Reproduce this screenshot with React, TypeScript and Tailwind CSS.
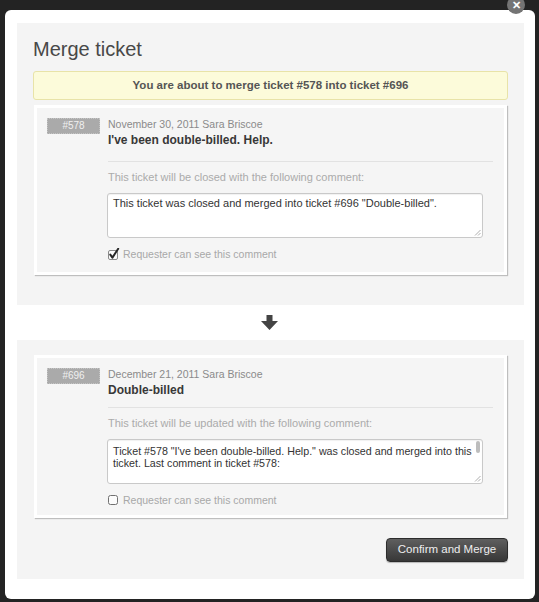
import React from "react";

function Badge({ id }: { id: string }) {
  return (
    <div className="flex h-[16px] w-[53px] shrink-0 items-center justify-center border border-dotted border-[#c4c4c4] bg-[#aaaaaa] text-[10px] leading-none text-[#f0f0f0]">
      {id}
    </div>
  );
}

function CheckedBox() {
  return (
    <svg width="12" height="12" viewBox="0 0 12 12" className="shrink-0">
      <rect x="0.5" y="2.5" width="9" height="9" rx="1.5" fill="#fbfbfb" stroke="#8a8a8a" />
      <path d="M2.3 6.6 L4.4 9.6 L10.2 0.8" fill="none" stroke="#262626" strokeWidth="2" strokeLinecap="round" strokeLinejoin="round" />
    </svg>
  );
}

function EmptyBox() {
  return (
    <svg width="12" height="12" viewBox="0 0 12 12" className="shrink-0">
      <rect x="0.5" y="1.5" width="9" height="9" rx="2" fill="#fbfbfb" stroke="#707070" />
    </svg>
  );
}

function Grip() {
  return (
    <svg width="7" height="7" viewBox="0 0 7 7" className="absolute bottom-[1px] right-[1px]">
      <path d="M6.5 1 L1 6.5 M6.5 4 L4 6.5" stroke="#9a9a9a" strokeWidth="0.8" />
    </svg>
  );
}

function Card({
  id,
  date,
  title,
  label,
  checked,
  compact,
  children,
}: {
  id: string;
  date: string;
  title: string;
  label: string;
  checked: boolean;
  compact: boolean;
  children: React.ReactNode;
}) {
  return (
    <div
      className={
        compact
          ? "mx-[1px] flex gap-[8px] border-[3px] border-white bg-[#f5f5f5] pb-[9px] pl-[10px] pr-[11px] pt-[10px] shadow-[1px_1px_1px_rgba(0,0,0,0.22)]"
          : "mx-[1px] flex gap-[8px] border-[3px] border-white bg-[#f5f5f5] pb-[12px] pl-[10px] pr-[11px] pt-[10px] shadow-[1px_1px_1px_rgba(0,0,0,0.22)]"
      }
    >
      <Badge id={id} />
      <div className="min-w-0 flex-1">
        <div className="text-[10.5px] leading-[13px] text-[#8a8a8a]">{date}</div>
        <div className="mt-[2px] text-[12px] font-bold leading-[15px] text-[#383838]">{title}</div>
        <div className={compact ? "mt-[9px] h-px bg-[#e2e2e2]" : "mt-[13px] h-px bg-[#e2e2e2]"} />
        <div className="mt-[8px] text-[11px] leading-[14px] text-[#ababab]">{label}</div>
        {children}
        <div className="mt-[10px] flex h-[12px] items-center gap-[3px]">
          {checked ? <CheckedBox /> : <EmptyBox />}
          <span className="text-[10.5px] leading-[12px] text-[#a8a8a8]">Requester can see this comment</span>
        </div>
      </div>
    </div>
  );
}

export default function App() {
  return (
    <div className="relative h-[602px] w-[539px] overflow-hidden bg-[#232323] pb-[3px] pl-[5px] pr-[4px] pt-[10px] font-['Liberation_Sans',Arial,sans-serif]">
      <div className="relative flex h-full flex-col rounded-[6px] bg-white pb-[20px] pl-[12px] pr-[11px] pt-[13px]">
        <div className="absolute left-[502px] top-[-14px] flex h-[18px] w-[18px] items-center justify-center rounded-full bg-[#747474] text-[11px] font-bold leading-none text-white">
          ✕
        </div>

        <div className="bg-[#f4f4f4] px-[16px] pb-[30px] pt-[14px]">
          <h1 className="text-[20px] font-normal leading-[24px] text-[#484848]">Merge ticket</h1>
          <div className="mt-[10px] flex h-[29px] items-center justify-center rounded-[3px] border border-[#e8e3a8] bg-[#fcfbda] text-[11.5px] font-bold text-[#555]">
            You are about to merge ticket #578 into ticket #696
          </div>
          <div className="mt-[5px]">
            <Card
              id="#578"
              date="November 30, 2011 Sara Briscoe"
              title="I've been double-billed. Help."
              label="This ticket will be closed with the following comment:"
              checked={true}
              compact={false}
            >
              <div className="relative -ml-[1px] mt-[9px] h-[45px] w-[376px] overflow-hidden rounded-[3px] border border-[#c9c9c9] bg-white px-[5px] pt-[3px] text-[11px] leading-[13px] text-[#333] shadow-[inset_0_1px_1px_rgba(0,0,0,0.06)]">
                This ticket was closed and merged into ticket #696 "Double-billed".
                <Grip />
              </div>
            </Card>
          </div>
        </div>

        <div className="flex h-[36px] items-center justify-center pr-[2px]">
          <svg width="17" height="15" viewBox="0 0 17 15">
            <polygon points="5.5,0 11.5,0 11.5,6 17,6 8.5,15 0,6 5.5,6" fill="#444" />
          </svg>
        </div>

        <div className="flex-1 bg-[#f4f4f4] px-[16px] pb-[17px] pt-[15px]">
          <Card
            id="#696"
            date="December 21, 2011 Sara Briscoe"
            title="Double-billed"
            label="This ticket will be updated with the following comment:"
            checked={false}
            compact={true}
          >
            <div className="relative -ml-[1px] mt-[9px] h-[45px] w-[376px] overflow-hidden rounded-[3px] border border-[#c9c9c9] bg-white px-[5px] pt-[5px] text-[10.7px] leading-[12px] text-[#333] shadow-[inset_0_1px_1px_rgba(0,0,0,0.06)]">
              <div className="whitespace-nowrap">Ticket #578 "I've been double-billed. Help." was closed and merged into this</div>
              <div className="whitespace-nowrap">ticket. Last comment in ticket #578:</div>
              <div className="h-[12px]" />
              <div className="whitespace-nowrap">Hello, where can I find my payment receipt for last month?</div>
              <div className="absolute right-[2px] top-[1px] h-[12px] w-[4px] rounded-full bg-[#bdbdbd]" />
              <Grip />
            </div>
          </Card>
          <div className="mt-[20px] flex justify-end">
            <div className="flex h-[24px] w-[122px] items-center justify-center rounded-[4px] border border-[#2c2c2c] bg-linear-to-b from-[#5f5f5f] to-[#383838] text-[11.5px] text-[#eee] shadow-[0_1px_1px_rgba(0,0,0,0.25)]">
              Confirm and Merge
            </div>
          </div>
        </div>
      </div>
    </div>
  );
}
